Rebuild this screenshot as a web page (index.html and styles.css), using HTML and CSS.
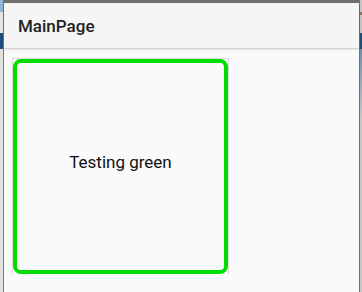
FILE: index.html
```html
<!DOCTYPE html>
<html lang="en">
<head>
    <meta charset="UTF-8">
    <meta name="viewport" content="width=device-width, initial-scale=1.0">
    <title>MainPage</title>
    <link rel="stylesheet" href="styles.css">
</head>
<body>
    <div class="desktop">
        <div class="edge edge-left"></div>

        <!-- App window -->
        <div class="window">
            <header class="nav-bar">
                <h1>MainPage</h1>
            </header>
            <main class="page">
                <div class="frame">
                    <div class="frame-inner">
                        <span class="label">Testing green</span>
                    </div>
                </div>
            </main>
        </div>

        <div class="edge edge-right"></div>
    </div>
</body>
</html>
```

FILE: styles.css
```css
/* Global Styles */
html, body {
    margin: 0;
    padding: 0;
    height: 100%;
    overflow: hidden;
}

body {
    font-family: Roboto, "Liberation Sans", sans-serif;
    color: #212121;
}

.desktop {
    display: flex;
    width: 362px;
    height: 292px;
}

/* Desktop showing at the sides */
.edge {
    flex: none;
}

.edge-left {
    width: 3px;
    background: linear-gradient(to bottom,
        #8fb6d8 0, #8fb6d8 12px,
        #e6e6e6 12px, #e6e6e6 33px,
        #1d4f7c 33px, #1d4f7c 49px,
        #e2e2e2 49px, #e2e2e2 100%);
}

.edge-right {
    width: 2px;
    background: linear-gradient(to bottom,
        #c4c4c4 0, #c4c4c4 12px,
        #8a7560 12px, #8a7560 15px,
        #c4c4c4 15px, #c4c4c4 33px,
        #1d4f7c 33px, #1d4f7c 49px,
        #6f8fae 49px, #c8c8c8 120px, #c8c8c8 100%);
}

/* Window */
.window {
    flex: 1;
    display: flex;
    flex-direction: column;
    border-top: 3px solid #707070;
    border-left: 1px solid #4a82c4;
    border-right: 1px solid #2f7fd6;
    background-color: #fafafa;
}

.nav-bar {
    flex: none;
    height: 45px;
    display: flex;
    align-items: center;
    padding-left: 14px;
    background-color: #f5f5f5;
    box-shadow: 0 1px 2px rgba(0, 0, 0, 0.22);
    position: relative;
    z-index: 1;
}

.nav-bar h1 {
    margin: 0;
    font-size: 17px;
    font-weight: 500;
    color: #212121;
}

.page {
    flex: 1;
    padding: 10px 0 0 8px;
}

/* Frame */
.frame {
    width: 215px;
    height: 215px;
    border: 1px solid #dadada;
    border-bottom-color: transparent;
}

.frame-inner {
    box-sizing: border-box;
    width: 215px;
    height: 215px;
    border: 4px solid #00dd00;
    border-radius: 8px;
    display: flex;
    align-items: center;
    justify-content: center;
}

.label {
    font-size: 17px;
    color: #111;
    margin-bottom: 9px;
}
```
